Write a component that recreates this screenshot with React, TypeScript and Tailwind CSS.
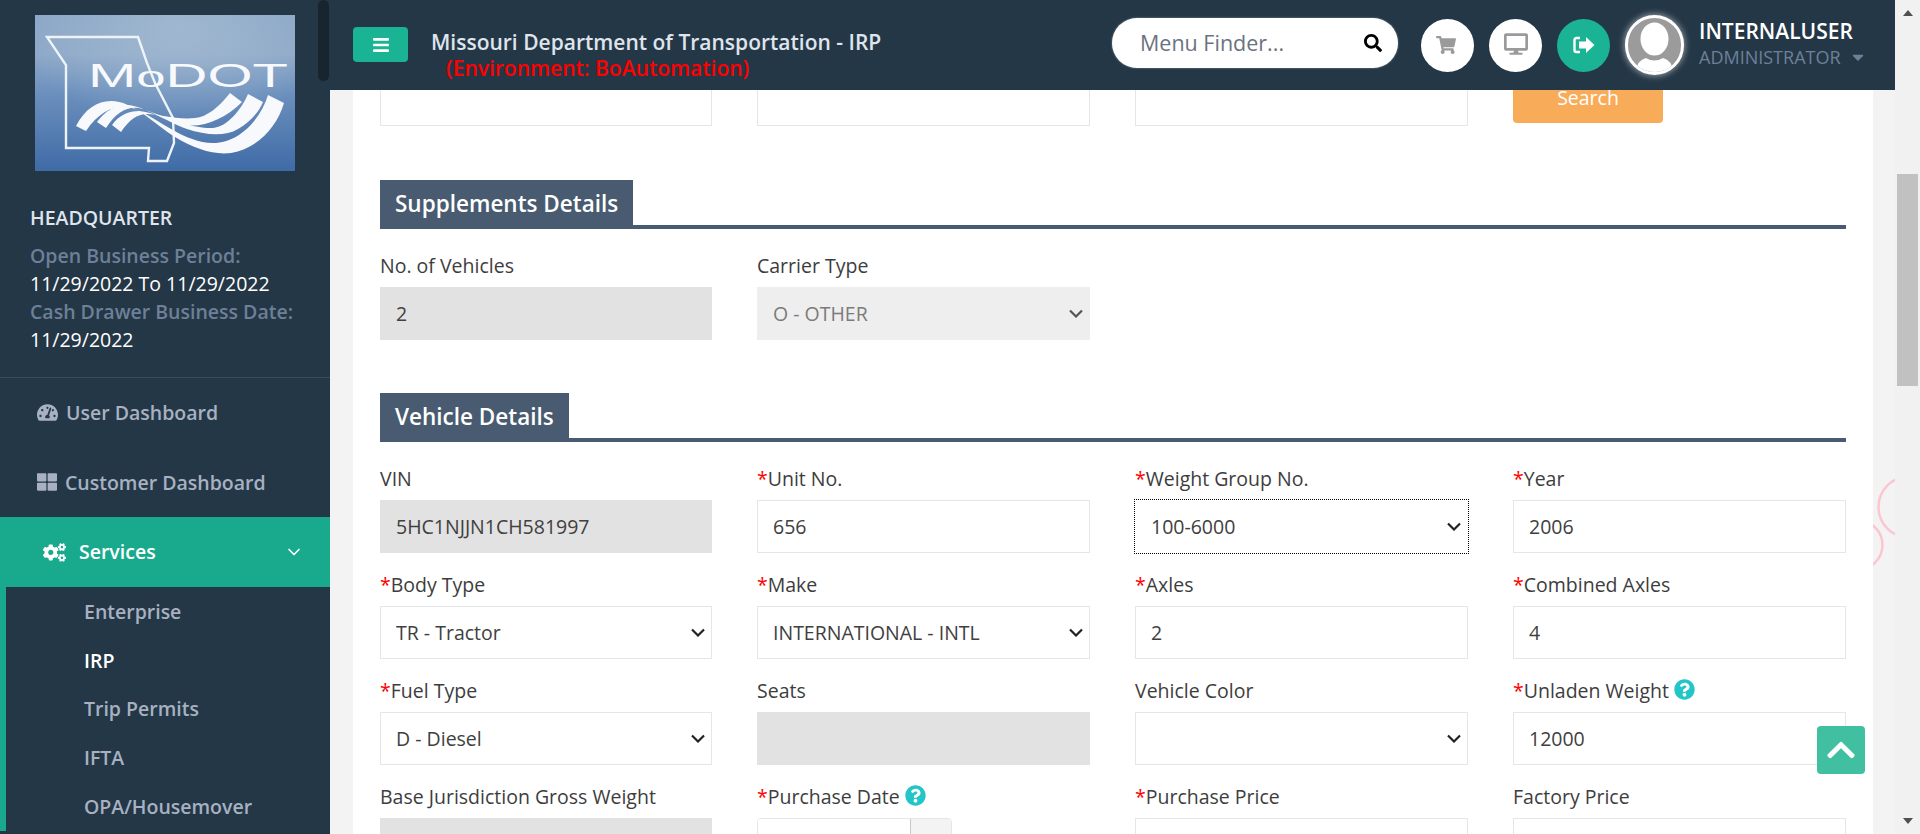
import React from "react";
import {
  FaBars,
  FaCaretDown,
  FaChevronUp,
  FaCogs,
  FaDesktop,
  FaQuestionCircle,
  FaSearch,
  FaShoppingCart,
  FaTachometerAlt,
  FaThLarge,
} from "react-icons/fa";
import { FiChevronDown } from "react-icons/fi";

const inputBase =
  "block w-full h-[53px] px-[15px] text-[19.5px] text-[#404040] border border-[#e5e6e7] bg-white";
const grayBase =
  "block w-full h-[53px] px-[15px] text-[19.5px] text-[#404040] bg-[#e2e2e2] border border-[#e2e2e2] outline-none";
const gridCols = "grid grid-cols-[332px_333px_333px_1fr] gap-x-[45px]";

function Logo() {
  return (
    <svg viewBox="0 0 260 156" className="block w-[260px] h-[156px] ml-[35px]">
      <defs>
        <linearGradient id="lg" x1="0" y1="0" x2="0" y2="1">
          <stop offset="0" stopColor="#8aa7c6" />
          <stop offset="0.25" stopColor="#8ea9c8" />
          <stop offset="0.5" stopColor="#6c90bd" />
          <stop offset="1" stopColor="#3f6ba6" />
        </linearGradient>
        <radialGradient id="lg2" cx="0.55" cy="0.1" r="0.6">
          <stop offset="0" stopColor="#a9bed4" stopOpacity="0.7" />
          <stop offset="1" stopColor="#a9bed4" stopOpacity="0" />
        </radialGradient>
      </defs>
      <rect width="260" height="156" fill="url(#lg)" />
      <rect width="260" height="156" fill="url(#lg2)" />
      <path
        d="M12 22 L103 22 L112 48 L120 68 L138 103 L139 128 L132 146 L113 146 L114 133 L31 133 L31 50 Z"
        fill="none"
        stroke="#eef3f8"
        strokeWidth="2.4"
      />
      <text
        x="53"
        y="72"
        fill="#f7f9fc"
        fontFamily="'Liberation Sans', sans-serif"
        fontSize="33"
        textLength="200"
        lengthAdjust="spacingAndGlyphs"
      >
        M<tspan fontSize="30">o</tspan>DOT
      </text>
      <g fill="#f7f9fc">
        <path d="M41 111 C50 94 62 86 76 86 C98 86 118 108 140 122 C160 134 178 140 196 138 C222 134 242 112 249 88 L233 80 C226 104 204 128 178 128 C150 128 124 104 100 94 C84 88 66 94 51 116 Z" />
        <path d="M62 107 C70 96 80 90 92 90 C110 91 130 106 152 114 C170 120 190 122 203 114 C215 107 224 97 228 87 L213 79 C207 94 192 112 178 113 C156 114 126 100 108 94 C94 90 82 96 71 113 Z" />
        <path d="M77 110 C84 100 94 96 104 96 C118 97 134 106 150 110 C168 113 190 104 207 87 L195 78 C184 92 172 102 160 103 C142 105 124 99 112 99 C102 99 94 105 86 117 Z" />
      </g>
    </svg>
  );
}

function Nav({ icon, label, iconClass = "" }: { icon: React.ReactNode; label: string; iconClass?: string }) {
  return (
    <div className="h-[69.5px] flex items-center pl-[37px] text-[19.5px] font-semibold text-[#a7b1c2]">
      <span className={iconClass}>{icon}</span>
      {label}
    </div>
  );
}

function Sidebar() {
  return (
    <aside className="relative w-[330px] shrink-0 bg-[#243746] overflow-hidden">
      <div className="absolute left-[318px] top-0 w-[11px] h-[81px] rounded-[6px] bg-[#18252f]" />
      <div className="pt-[15px]">
        <Logo />
      </div>
      <div className="pl-[30px] pt-[33px] pb-[23px] border-b border-[#3b4c5b] text-[19.5px] leading-[28px]">
        <div className="font-semibold text-[#dfe4ed] mb-[10px]">HEADQUARTER</div>
        <div className="font-semibold text-[#6d8098]">Open Business Period:</div>
        <div className="text-white">11/29/2022 To 11/29/2022</div>
        <div className="font-semibold text-[#6d8098]">Cash Drawer Business Date:</div>
        <div className="text-white">11/29/2022</div>
      </div>
      <Nav icon={<FaTachometerAlt className="w-[21px] h-[21px]" />} label="User Dashboard" iconClass="mr-[8px]" />
      <Nav icon={<FaThLarge className="w-[20px] h-[20px]" />} label="Customer Dashboard" iconClass="mr-[8px]" />
      <div className="h-[70px] flex items-center pl-[43px] pr-[26px] bg-[#19aa8d] text-[19.5px] font-semibold text-white">
        <FaCogs className="w-[23px] h-[23px] mr-[13px]" />
        <span className="flex-1">Services</span>
        <FiChevronDown className="w-[20px] h-[20px]" />
      </div>
      <div className="border-l-[6px] border-[#19aa8d] pl-[78px] text-[19.5px] font-semibold text-[#a7b1c2]">
        {["Enterprise", "IRP", "Trip Permits", "IFTA", "OPA/Housemover"].map((t) => (
          <div key={t} className={`h-[48.75px] flex items-center ${t === "IRP" ? "text-white" : ""}`}>
            {t}
          </div>
        ))}
      </div>
    </aside>
  );
}

function Circle({ children, className }: { children: React.ReactNode; className: string }) {
  return <div className={`w-[53px] h-[53px] rounded-full flex items-center justify-center ${className}`}>{children}</div>;
}

function Header() {
  return (
    <header className="h-[90px] shrink-0 bg-[#243746] flex items-center pl-[23px]">
      <button className="w-[55px] h-[35px] mb-[1px] rounded-[4px] bg-[#1ab394] text-white flex items-center justify-center">
        <FaBars className="w-[18px] h-[18px]" />
      </button>
      <div className="ml-[23px] text-[21px] leading-[26px] font-semibold text-[#dfe4ed] mt-[19px]">
        <div>Missouri Department of Transportation - IRP</div>
        <div className="pl-[15px] text-[#ff0000]">(Environment: BoAutomation)</div>
      </div>
      <div className="ml-auto mb-[4px] w-[286px] h-[50px] rounded-full bg-white shadow-[0_0_2px_rgba(255,255,255,0.5)] flex items-center pl-[28px] pr-[16px]">
        <span className="flex-1 text-[21.5px] text-[#6b7280]">Menu Finder...</span>
        <FaSearch className="w-[18px] h-[18px] text-black" />
      </div>
      <Circle className="ml-[23px] bg-white text-[#9a9a9a]">
        <FaShoppingCart className="w-[20px] h-[20px] mr-[4px]" />
      </Circle>
      <Circle className="ml-[15px] bg-white text-[#9a9a9a]">
        <FaDesktop className="w-[24px] h-[24px] mb-[2px]" />
      </Circle>
      <Circle className="ml-[15px] bg-[#1ab394] text-white">
        <svg viewBox="0 0 22 18" className="w-[22px] h-[18px]" fill="none">
          <path d="M7 2 H3.5 Q1.5 2 1.5 4 V14 Q1.5 16 3.5 16 H7" stroke="currentColor" strokeWidth="2.4" />
          <path d="M6 5.5 H13 V1 L21.5 9 L13 17 V12.5 H6 Z" fill="currentColor" />
        </svg>
      </Circle>
      <div className="ml-[15px] w-[59px] h-[60px] rounded-full border-[3px] border-white bg-[#9b9b9b] overflow-hidden shadow-[0_0_6px_1px_rgba(255,255,255,0.5)]">
        <svg viewBox="0 0 53 54" className="block w-full h-full">
          <ellipse cx="26.5" cy="21" rx="14" ry="16.5" fill="#fff" />
          <path d="M8 54 Q9 42 18 40 Q26 45 35 40 Q44 42 45 54 Z" fill="#fff" />
        </svg>
      </div>
      <div className="ml-[15px] w-[196px] mb-[3px]">
        <div className="text-[21px] leading-[28px] font-semibold text-white mb-[-2px]">INTERNALUSER</div>
        <div className="flex items-center text-[18px] leading-[28px] text-[#6d8098]">
          ADMINISTRATOR
          <FaCaretDown className="ml-[8px] w-[18px] h-[18px]" />
        </div>
      </div>
    </header>
  );
}

function SectionTitle({ title, className }: { title: string; className: string }) {
  return (
    <div className={`flex border-b-[4px] border-[#485b70] ${className}`}>
      <div className="h-[45px] px-[15px] pt-[3px] bg-[#485b70] text-white text-[22.5px] font-semibold leading-[41px]">
        {title}
      </div>
    </div>
  );
}

function Help() {
  return <FaQuestionCircle className="inline-block ml-[5px] w-[21px] h-[21px] text-[#23c6c8] align-[-2px]" />;
}

function Field({
  label,
  required,
  help,
  children,
}: {
  label: string;
  required?: boolean;
  help?: boolean;
  children: React.ReactNode;
}) {
  return (
    <div className="mb-[19px]">
      <label className="block h-[26px] leading-[26px] mb-[8px] text-[19.5px] text-[#3d3d3d] whitespace-nowrap">
        {required && <span className="text-[#ff0000]">*</span>}
        {label}
        {help && <Help />}
      </label>
      {children}
    </div>
  );
}

function Text({ value = "" }: { value?: string }) {
  return <input readOnly value={value} className={`${inputBase} outline-none`} />;
}

function Gray({ value = "" }: { value?: string }) {
  return <input readOnly value={value} className={grayBase} />;
}

function Arrow({ color = "#222222" }: { color?: string }) {
  return (
    <svg
      viewBox="0 0 14 9"
      className="absolute right-[7px] top-[22px] w-[14px] h-[9px] pointer-events-none"
      fill="none"
      stroke={color}
      strokeWidth="2.2"
    >
      <path d="M1 1.5 L7 7.5 L13 1.5" />
    </svg>
  );
}

function Sel({ value, focused }: { value: string; focused?: boolean }) {
  return (
    <div className="relative">
      <select
        value={value}
        onChange={() => {}}
        className={`${inputBase} appearance-none ${
          focused ? "outline-1 outline-dotted outline-black border-white" : "outline-none"
        }`}
      >
        <option value={value}>{value}</option>
      </select>
      <Arrow />
    </div>
  );
}

function Content() {
  return (
    <main className="flex-1 min-h-0 overflow-hidden bg-[#f3f3f4] pl-[23px] pr-[22px]">
      <div className="h-full bg-white px-[27px]">
        <div className={`${gridCols} h-[36px]`}>
          <div className="border border-t-0 border-[#e5e6e7]" />
          <div className="border border-t-0 border-[#e5e6e7]" />
          <div className="border border-t-0 border-[#e5e6e7]" />
          <div>
            <button className="w-[150px] h-[33px] rounded-b-[4px] bg-[#f8ac59] text-white text-[19.5px] leading-[16px] flex items-start justify-center">
              Search
            </button>
          </div>
        </div>

        <SectionTitle title="Supplements Details" className="mt-[54px] mb-[24px]" />
        <div className={gridCols}>
          <Field label="No. of Vehicles">
            <Gray value="2" />
          </Field>
          <Field label="Carrier Type">
            <div className="relative">
              <select
                disabled
                value="O"
                onChange={() => {}}
                className="block w-full h-[53px] px-[15px] text-[19.5px] text-[#7b7b7b] bg-[#eeeeee] border border-[#eeeeee] outline-none opacity-100 appearance-none"
              >
                <option value="O">O - OTHER</option>
              </select>
              <Arrow color="#555555" />
            </div>
          </Field>
        </div>

        <SectionTitle title="Vehicle Details" className="mt-[34px] mb-[24px]" />
        <div className={gridCols}>
          <Field label="VIN">
            <Gray value="5HC1NJJN1CH581997" />
          </Field>
          <Field label="Unit No." required>
            <Text value="656" />
          </Field>
          <Field label="Weight Group No." required>
            <Sel value="100-6000" focused />
          </Field>
          <Field label="Year" required>
            <Text value="2006" />
          </Field>

          <Field label="Body Type" required>
            <Sel value="TR - Tractor" />
          </Field>
          <Field label="Make" required>
            <Sel value="INTERNATIONAL - INTL" />
          </Field>
          <Field label="Axles" required>
            <Text value="2" />
          </Field>
          <Field label="Combined Axles" required>
            <Text value="4" />
          </Field>

          <Field label="Fuel Type" required>
            <Sel value="D - Diesel" />
          </Field>
          <Field label="Seats">
            <Gray />
          </Field>
          <Field label="Vehicle Color">
            <Sel value="" />
          </Field>
          <Field label="Unladen Weight" required help>
            <Text value="12000" />
          </Field>

          <Field label="Base Jurisdiction Gross Weight">
            <Gray />
          </Field>
          <Field label="Purchase Date" required help>
            <div className="flex w-[195px] h-[53px] border border-[#e5e6e7] rounded-[4px] overflow-hidden">
              <div className="w-[153px] border-r border-[#c9c9c9] bg-white" />
              <div className="flex-1 bg-[#f3f3f3]" />
            </div>
          </Field>
          <Field label="Purchase Price" required>
            <Text />
          </Field>
          <Field label="Factory Price">
            <Text />
          </Field>
        </div>
      </div>
    </main>
  );
}

function PageScrollbar() {
  return (
    <div className="w-[25px] shrink-0 bg-[#f1f1f1] flex flex-col items-center">
      <div className="h-[174px] w-full flex justify-center pt-[10px]">
        <div className="w-0 h-0 border-x-[5.5px] border-x-transparent border-b-[6px] border-b-[#505050]" />
      </div>
      <div className="w-[21px] h-[212px] bg-[#c1c1c1]" />
      <div className="flex-1" />
      <div className="w-0 h-0 mb-[10px] border-x-[5.5px] border-x-transparent border-t-[6px] border-t-[#505050]" />
    </div>
  );
}

export default function App() {
  return (
    <div className="relative flex w-[1920px] h-[834px] overflow-hidden font-['Open_Sans',sans-serif] bg-[#f3f3f4]">
      <Sidebar />
      <div className="flex-1 min-w-0 flex flex-col">
        <Header />
        <Content />
      </div>
      <PageScrollbar />
      <svg className="absolute left-[1873px] top-[470px] w-[22px] h-[100px]" viewBox="0 0 22 100" fill="none">
        <circle cx="36" cy="37" r="30.5" stroke="#fcc6d1" strokeWidth="2.5" />
        <circle cx="-15" cy="75" r="24.5" stroke="#fcc6d1" strokeWidth="2.5" />
      </svg>
      <div className="absolute left-[1817px] top-[726px] w-[48px] h-[48px] rounded-[4px] bg-[#41c0a1] flex items-center justify-center text-white">
        <FaChevronUp className="w-[32px] h-[32px]" />
      </div>
    </div>
  );
}
